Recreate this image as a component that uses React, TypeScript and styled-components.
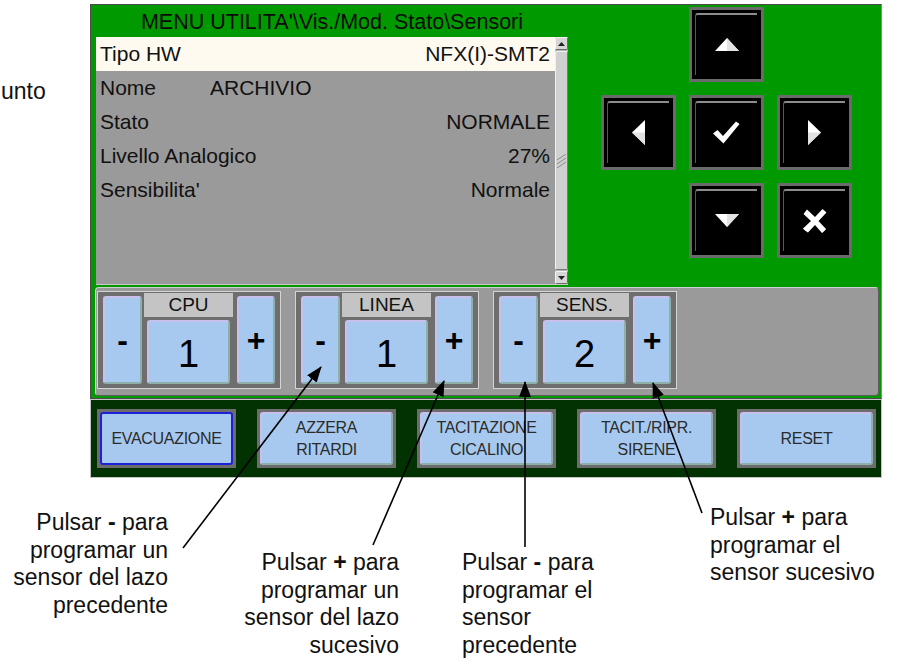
import React from "react";
import styled, { createGlobalStyle, css } from "styled-components";

const GlobalStyle = createGlobalStyle`
  html, body {
    margin: 0;
    padding: 0;
    background: #fff;
  }
  body {
    font-family: "Liberation Sans", Arial, sans-serif;
  }
`;

const Page = styled.div`
  position: relative;
  width: 898px;
  height: 659px;
  overflow: hidden;
  box-sizing: border-box;
  padding-top: 4px;
  background: #fff;
`;

const Device = styled.div`
  margin-left: 90px;
  width: 792px;
`;

const GreenPanel = styled.div`
  box-sizing: border-box;
  background: #009a00;
  border: 1px solid #4c4c4c;
  border-right-color: #8c8c8c;
  padding: 0 1px 2px 0;
`;

const TopArea = styled.div`
  display: flex;
  height: 280px;
  padding-left: 5px;
`;

const LeftCol = styled.div`
  width: 472px;
  display: flex;
  flex-direction: column;
`;

const Title = styled.div`
  height: 32px;
  box-sizing: border-box;
  padding-top: 3px;
  display: flex;
  align-items: center;
  justify-content: center;
  font-size: 21.5px;
  color: #0a0a0a;
  white-space: nowrap;
`;

const List = styled.div`
  display: flex;
  height: 248px;
  background: #9a9a9a;
  border-bottom: 1px solid #c8c8c8;
  box-sizing: border-box;
`;

const Rows = styled.div`
  flex: 1;
  display: flex;
  flex-direction: column;
`;

const Row = styled.div<{ $selected?: boolean }>`
  height: 34px;
  display: flex;
  align-items: center;
  justify-content: space-between;
  padding: 0 5px 0 4px;
  font-size: 21px;
  color: #111;
  white-space: nowrap;
  ${(p) =>
    p.$selected &&
    css`
      background: #fffaf0;
    `}
`;

const RowLabel = styled.span<{ $fixed?: boolean }>`
  ${(p) =>
    p.$fixed &&
    css`
      width: 110px;
    `}
`;

const RowValue = styled.span<{ $left?: boolean }>`
  ${(p) =>
    p.$left &&
    css`
      margin-right: auto;
    `}
`;

const ScrollBar = styled.div`
  width: 13px;
  display: flex;
  flex-direction: column;
  background: #b4b4b4;
`;

const ScrollArrow = styled.div`
  height: 13px;
  box-sizing: border-box;
  background: #d6d6d6;
  border: 1px solid;
  border-color: #f4f4f4 #6c6c6c #6c6c6c #f4f4f4;
  border-radius: 2px;
  display: flex;
  align-items: center;
  justify-content: center;
`;

const ScrollThumb = styled.div`
  flex: 1;
  margin: 1px 0;
  box-sizing: border-box;
  background: #d0d0d0;
  border: 1px solid;
  border-color: #f0f0f0 #7a7a7a #7a7a7a #f0f0f0;
  border-radius: 2px;
  display: flex;
  align-items: center;
  justify-content: center;
`;

const NavGrid = styled.div`
  margin-left: 33px;
  padding-top: 2px;
  display: grid;
  grid-template-columns: repeat(3, 75px);
  grid-template-rows: repeat(3, 75px);
  gap: 13px;
`;

const NavButton = styled.div<{ $col: number; $row: number }>`
  grid-column: ${(p) => p.$col};
  grid-row: ${(p) => p.$row};
  position: relative;
  box-sizing: border-box;
  background: #000;
  border: 3px solid #6a6a6a;
  display: flex;
  align-items: center;
  justify-content: center;
  &::before {
    content: "";
    position: absolute;
    top: 3px;
    left: 3px;
    right: 4px;
    bottom: 4px;
    border-top: 2px solid #8c8c8c;
    border-left: 1px solid #5a5a5a;
    border-top-left-radius: 3px;
  }
`;

const CounterStrip = styled.div`
  margin: 2px 0 0 4px;
  width: 784px;
  height: 109px;
  box-sizing: border-box;
  background: #9a9a9a;
  border: 1px solid;
  border-color: #cfcfcf #5e5e5e #5e5e5e #cfcfcf;
  border-radius: 4px;
  padding: 3px 1px;
  display: flex;
  gap: 14px;
  align-items: flex-start;
`;

const Group = styled.div`
  width: 184px;
  height: 98px;
  box-sizing: border-box;
  border: 1px solid #d4d4d4;
  background: #6e6e6e;
  display: flex;
  padding: 1px 5px 4px 5px;
`;

const blueFace = css`
  box-sizing: border-box;
  background: #a7c9ef;
  border: 2px solid;
  border-color: #c7c0ea #8fb0a8 #8fb0a8 #c7c0ea;
  border-radius: 3px;
  color: #000;
  display: flex;
  align-items: center;
  justify-content: center;
`;

const StepButton = styled.div<{ $w: number }>`
  ${blueFace};
  width: ${(p) => p.$w}px;
  margin-top: 3px;
  font-size: 32px;
  font-weight: bold;
`;

const MidCol = styled.div`
  width: 89px;
  margin: 0 4px 0 2px;
  display: flex;
  flex-direction: column;
`;

const GroupLabel = styled.div`
  height: 24px;
  background: #c4c4c4;
  font-size: 19px;
  color: #111;
  display: flex;
  align-items: center;
  justify-content: center;
`;

const GroupValue = styled.div`
  ${blueFace};
  flex: 1;
  margin: 3px 3px 0;
  font-size: 38px;
  padding-top: 4px;
`;

const BottomBar = styled.div`
  box-sizing: border-box;
  height: 79px;
  background: #023202;
  border: 1px solid #c4c4c4;
  padding: 9px 0 0 6px;
  display: flex;
  gap: 21px;
`;

const ActionFrame = styled.div`
  width: 139px;
  height: 59px;
  box-sizing: border-box;
  background: #6c6c6c;
  padding: 3px;
`;

const ActionButton = styled.div<{ $active?: boolean }>`
  ${blueFace};
  height: 100%;
  font-size: 16px;
  line-height: 22px;
  color: #2b2b2b;
  text-align: center;
  letter-spacing: -0.3px;
  ${(p) =>
    p.$active &&
    css`
      border-color: #1d22d8;
    `}
`;

const Callout = styled.div<{ $top: number; $left?: number; $right?: number }>`
  position: absolute;
  top: ${(p) => p.$top}px;
  ${(p) => (p.$left !== undefined ? `left: ${p.$left}px;` : "")}
  ${(p) => (p.$right !== undefined ? `right: ${p.$right}px; text-align: right;` : "")}
  font-size: 23px;
  line-height: 27.5px;
  color: #111;
  white-space: nowrap;
`;

const Overlay = styled.svg`
  position: absolute;
  left: 0;
  top: 0;
  pointer-events: none;
`;

const rows = [
  { label: "Tipo HW", value: "NFX(I)-SMT2", selected: true },
  { label: "Nome", value: "ARCHIVIO", left: true },
  { label: "Stato", value: "NORMALE" },
  { label: "Livello Analogico", value: "27%" },
  { label: "Sensibilita'", value: "Normale" },
];

const counters = [
  { label: "CPU", value: "1" },
  { label: "LINEA", value: "1" },
  { label: "SENS.", value: "2" },
];

const actions: { lines: string[]; active?: boolean }[] = [
  { lines: ["EVACUAZIONE"], active: true },
  { lines: ["AZZERA", "RITARDI"] },
  { lines: ["TACITAZIONE", "CICALINO"] },
  { lines: ["TACIT./RIPR.", "SIRENE"] },
  { lines: ["RESET"] },
];

const arrows = [
  [183, 548, 321, 367],
  [373, 545, 444, 381],
  [525, 547, 525, 382],
  [702, 513, 653, 383],
];

const Icon = ({ kind }: { kind: string }) => {
  if (kind === "up")
    return (
      <svg width="24" height="13" viewBox="0 0 24 13">
        <polygon points="12,0 24,13 0,13" fill="#fff" />
        <polygon points="12,0 24,13 12,13" fill="#e2e2e2" />
      </svg>
    );
  if (kind === "down")
    return (
      <svg width="24" height="13" viewBox="0 0 24 13">
        <polygon points="0,0 24,0 12,13" fill="#fff" />
        <polygon points="12,0 24,0 12,13" fill="#e2e2e2" />
      </svg>
    );
  if (kind === "left")
    return (
      <svg width="13" height="25" viewBox="0 0 13 25">
        <polygon points="13,0 13,25 0,12.5" fill="#fff" />
        <polygon points="13,12.5 13,25 0,12.5" fill="#e2e2e2" />
      </svg>
    );
  if (kind === "right")
    return (
      <svg width="13" height="25" viewBox="0 0 13 25">
        <polygon points="0,0 13,12.5 0,25" fill="#fff" />
        <polygon points="0,12.5 13,12.5 0,25" fill="#e2e2e2" />
      </svg>
    );
  if (kind === "ok")
    return (
      <svg width="27" height="23" viewBox="0 0 27 23">
        <path d="M0 12.5 L4.5 9 L10 15 L23 0.5 L26.5 3 L10.5 22.5 Z" fill="#fff" />
      </svg>
    );
  // heavy ballot X with flared ends
  return (
    <svg width="24" height="24" viewBox="0 0 24 24">
      <path
        d="M0.5 5 L4 0.5 L12 8 L19.5 0 L23.5 3.5 L15.5 12 L23 20 L22 21 L19 24 L12 16 L5 23.5 L1.5 21 L0 19.5 L8 12 Z"
        fill="#fff"
      />
      <path d="M0 19.5 L3 18.5 L5 23.5 Z M19 24 L19.5 20.5 L23 20 Z" fill="#fff" />
    </svg>
  );
};

const App = () => {
  return (
    <Page>
      <GlobalStyle />
      <Device>
        <GreenPanel>
          <TopArea>
            <LeftCol>
              <Title>{"MENU UTILITA'\\Vis./Mod. Stato\\Sensori"}</Title>
              <List>
                <Rows>
                  {rows.map((r) => (
                    <Row key={r.label} $selected={r.selected}>
                      <RowLabel $fixed={r.left}>{r.label}</RowLabel>
                      <RowValue $left={r.left}>{r.value}</RowValue>
                    </Row>
                  ))}
                </Rows>
                <ScrollBar>
                  <ScrollArrow>
                    <svg width="7" height="4" viewBox="0 0 7 4">
                      <polygon points="3.5,0 7,4 0,4" fill="#222" />
                    </svg>
                  </ScrollArrow>
                  <ScrollThumb>
                    <svg width="9" height="14" viewBox="0 0 9 14">
                      <path d="M0 6 L9 0 M0 10 L9 4 M0 14 L9 8" stroke="#8a8a8a" strokeWidth="1" />
                    </svg>
                  </ScrollThumb>
                  <ScrollArrow>
                    <svg width="7" height="4" viewBox="0 0 7 4">
                      <polygon points="0,0 7,0 3.5,4" fill="#222" />
                    </svg>
                  </ScrollArrow>
                </ScrollBar>
              </List>
            </LeftCol>
            <NavGrid>
              <NavButton $col={2} $row={1}>
                <Icon kind="up" />
              </NavButton>
              <NavButton $col={1} $row={2}>
                <Icon kind="left" />
              </NavButton>
              <NavButton $col={2} $row={2}>
                <Icon kind="ok" />
              </NavButton>
              <NavButton $col={3} $row={2}>
                <Icon kind="right" />
              </NavButton>
              <NavButton $col={2} $row={3}>
                <Icon kind="down" />
              </NavButton>
              <NavButton $col={3} $row={3}>
                <Icon kind="cancel" />
              </NavButton>
            </NavGrid>
          </TopArea>
          <CounterStrip>
            {counters.map((c) => (
              <Group key={c.label}>
                <StepButton $w={39}>-</StepButton>
                <MidCol>
                  <GroupLabel>{c.label}</GroupLabel>
                  <GroupValue>{c.value}</GroupValue>
                </MidCol>
                <StepButton $w={38}>+</StepButton>
              </Group>
            ))}
          </CounterStrip>
        </GreenPanel>
        <BottomBar>
          {actions.map((a) => (
            <ActionFrame key={a.lines.join(" ")}>
              <ActionButton $active={a.active}>
                <div>
                  {a.lines.map((l) => (
                    <div key={l}>{l}</div>
                  ))}
                </div>
              </ActionButton>
            </ActionFrame>
          ))}
        </BottomBar>
      </Device>

      <Callout $top={78} $left={1}>
        unto
      </Callout>
      <Callout $top={509} $right={730}>
        Pulsar <b>-</b> para
        <br />
        programar un
        <br />
        sensor del lazo
        <br />
        precedente
      </Callout>
      <Callout $top={549} $right={499}>
        Pulsar <b>+</b> para
        <br />
        programar un
        <br />
        sensor del lazo
        <br />
        sucesivo
      </Callout>
      <Callout $top={549} $left={462}>
        Pulsar <b>-</b> para
        <br />
        programar el
        <br />
        sensor
        <br />
        precedente
      </Callout>
      <Callout $top={504} $left={710}>
        Pulsar <b>+</b> para
        <br />
        programar el
        <br />
        sensor sucesivo
      </Callout>

      <Overlay width="898" height="659" viewBox="0 0 898 659">
        <defs>
          <marker
            id="head"
            markerUnits="userSpaceOnUse"
            markerWidth="16"
            markerHeight="12"
            refX="15"
            refY="6"
            orient="auto"
          >
            <polygon points="0,0 16,6 0,12" fill="#000" />
          </marker>
        </defs>
        {arrows.map(([x1, y1, x2, y2], i) => (
          <line
            key={i}
            x1={x1}
            y1={y1}
            x2={x2}
            y2={y2}
            stroke="#000"
            strokeWidth="1.6"
            markerEnd="url(#head)"
          />
        ))}
      </Overlay>
    </Page>
  );
};

export default App;
